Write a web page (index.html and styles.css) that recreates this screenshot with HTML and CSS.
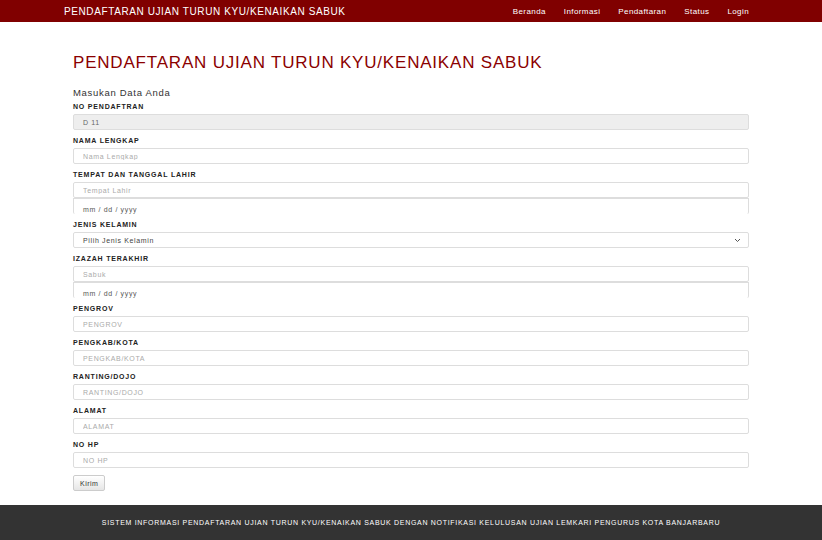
FILE: index.html
```html
<!DOCTYPE html>
<html lang="id">
<head>
    <meta charset="UTF-8">
    <meta name="viewport" content="width=device-width, initial-scale=1.0">
    <title>Pendaftaran Ujian Turun Kyu/Kenaikan Sabuk</title>
    <link rel="stylesheet" href="styles.css">
</head>
<body>
    <!-- Navbar -->
    <header class="navbar">
        <a class="brand" href="#">PENDAFTARAN UJIAN TURUN KYU/KENAIKAN SABUK</a>
        <nav class="nav-links">
            <a href="#">Beranda</a>
            <a href="#">Informasi</a>
            <a href="#">Pendaftaran</a>
            <a href="#">Status</a>
            <a href="#">Login</a>
        </nav>
    </header>

    <main class="content">
        <h1 class="page-title">PENDAFTARAN UJIAN TURUN KYU/KENAIKAN SABUK</h1>
        <p class="intro">Masukan Data Anda</p>

        <form class="form">
            <div class="group">
                <label>NO PENDAFTRAN</label>
                <input class="field" type="text" value="D 11" disabled>
            </div>
            <div class="group">
                <label>NAMA LENGKAP</label>
                <input class="field" type="text" placeholder="Nama Lengkap">
            </div>
            <div class="group">
                <label>TEMPAT DAN TANGGAL LAHIR</label>
                <input class="field" type="text" placeholder="Tempat Lahir">
                <div class="field date">mm / dd / yyyy</div>
            </div>
            <div class="group">
                <label>JENIS KELAMIN</label>
                <div class="field select">
                    <span>Pilih Jenis Kelamin</span>
                    <svg width="7" height="5" viewBox="0 0 7 5"><path d="M1 1l2.5 2.5L6 1" fill="none" stroke="#555" stroke-width="1"/></svg>
                </div>
            </div>
            <div class="group">
                <label>IZAZAH TERAKHIR</label>
                <input class="field" type="text" placeholder="Sabuk">
                <div class="field date">mm / dd / yyyy</div>
            </div>
            <div class="group">
                <label>PENGROV</label>
                <input class="field" type="text" placeholder="PENGROV">
            </div>
            <div class="group">
                <label>PENGKAB/KOTA</label>
                <input class="field" type="text" placeholder="PENGKAB/KOTA">
            </div>
            <div class="group">
                <label>RANTING/DOJO</label>
                <input class="field" type="text" placeholder="RANTING/DOJO">
            </div>
            <div class="group">
                <label>ALAMAT</label>
                <input class="field" type="text" placeholder="ALAMAT">
            </div>
            <div class="group">
                <label>NO HP</label>
                <input class="field" type="text" placeholder="NO HP">
            </div>
            <button class="btn" type="button">Kirim</button>
        </form>
    </main>

    <footer class="footer">
        SISTEM INFORMASI PENDAFTARAN UJIAN TURUN KYU/KENAIKAN SABUK DENGAN NOTIFIKASI KELULUSAN UJIAN LEMKARI PENGURUS KOTA BANJARBARU
    </footer>
</body>
</html>
```

FILE: styles.css
```css
/* Basic Styling */
* {
    box-sizing: border-box;
}

body {
    margin: 0;
    font-family: "Liberation Sans", Arial, sans-serif;
    background-color: #fff;
    color: #333;
}

/* Navbar */
.navbar {
    height: 22px;
    background-color: #800000;
    display: flex;
    align-items: center;
    justify-content: space-between;
    padding: 0 73px 0 64px;
}

.brand {
    color: #fff;
    text-decoration: none;
    font-size: 10px;
    letter-spacing: 0.6px;
}

.nav-links {
    display: flex;
    gap: 18px;
}

.nav-links a {
    color: #fff;
    text-decoration: none;
    font-size: 8px;
    letter-spacing: 0.4px;
}

/* Content */
.content {
    padding: 0 73px;
}

.page-title {
    margin: 30px 0 0;
    font-size: 17px;
    line-height: 22px;
    font-weight: normal;
    letter-spacing: 0.8px;
    color: #8b0000;
}

.intro {
    margin: 13px 0 3px;
    font-size: 9.5px;
    line-height: 12px;
    letter-spacing: 0.7px;
}

.group {
    margin-bottom: 6px;
}

.group label {
    display: block;
    font-size: 7px;
    line-height: 10px;
    font-weight: bold;
    letter-spacing: 0.8px;
    color: #222;
    margin-bottom: 2px;
}

.field {
    display: block;
    width: 100%;
    height: 16px;
    padding: 0 9px;
    border: 1px solid #ddd;
    border-radius: 2px;
    font-family: inherit;
    font-size: 7px;
    letter-spacing: 0.65px;
    color: #555;
    background: #fff;
}

.field::placeholder {
    color: #aaa;
}

.field:disabled {
    background-color: #eee;
    color: #666;
}

.date {
    display: flex;
    align-items: flex-end;
    line-height: 8px;
    border-bottom: none;
    border-radius: 0 0 2px 2px;
}

.select {
    display: flex;
    align-items: center;
    justify-content: space-between;
    padding-right: 7px;
    color: #444;
}

.btn {
    display: block;
    margin-top: 7px;
    height: 16px;
    padding: 0 6px;
    border: 1px solid #ccc;
    border-radius: 2px;
    background: linear-gradient(#fff, #e6e6e6);
    font-family: inherit;
    font-size: 7px;
    letter-spacing: 0.5px;
    color: #333;
}

/* Footer */
.footer {
    margin-top: 14px;
    height: 35px;
    background-color: #333;
    color: #fff;
    font-size: 7px;
    letter-spacing: 0.7px;
    display: flex;
    align-items: center;
    justify-content: center;
}
```
